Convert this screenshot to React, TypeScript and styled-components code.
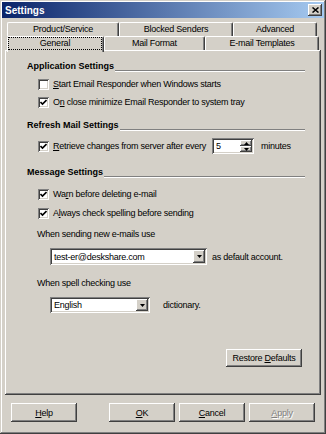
import React from "react";
import styled, { createGlobalStyle, css } from "styled-components";

const Global = createGlobalStyle`
  html, body { margin: 0; padding: 0; background: #d4d0c8; }
  body {
    font-family: "Liberation Sans", Arial, sans-serif;
    font-size: 9px;
    color: #000;
  }
  #root { width: 326px; height: 434px; }
  u { text-decoration-thickness: 1px; text-underline-offset: 1px; }
`;

const raised = css`
  box-shadow: inset -1px -1px #404040, inset 1px 1px #ffffff,
    inset -2px -2px #808080, inset 2px 2px #d4d0c8;
`;

const sunken = css`
  box-shadow: inset 1px 1px #808080, inset -1px -1px #ffffff,
    inset 2px 2px #404040, inset -2px -2px #d4d0c8;
`;

const Window = styled.div`
  width: 326px;
  height: 434px;
  box-sizing: border-box;
  padding: 2px;
  background: #d4d0c8;
  box-shadow: inset -1px -1px #404040, inset 1px 1px #d4d0c8,
    inset -2px -2px #808080, inset 2px 2px #ffffff;
  display: flex;
  flex-direction: column;
  letter-spacing: -0.25px;
`;

const TitleBar = styled.div`
  height: 16px;
  flex: none;
  display: flex;
  align-items: center;
  justify-content: space-between;
  padding: 0 2px 0 3px;
  background: linear-gradient(to right, #0a246a, #a6caf0);
`;

const Title = styled.span`
  color: #fff;
  font-weight: bold;
  font-size: 10px;
  letter-spacing: 0;
`;

const CloseButton = styled.div`
  width: 14px;
  height: 12px;
  box-sizing: border-box;
  background: #d4d0c8;
  ${raised};
  display: flex;
  align-items: center;
  justify-content: center;
`;

const Body = styled.div`
  flex: 1;
  display: flex;
  flex-direction: column;
  margin-top: 4px;
  padding: 0 3px;
  min-height: 0;
`;

const TabRow = styled.div`
  display: flex;
  height: 14px;
  padding-left: 2px;
  flex: none;
`;

const Tab = styled.div<{ $w: number; $selected?: boolean }>`
  width: ${(p) => p.$w}px;
  height: ${(p) => (p.$selected ? 16 : 14)}px;
  margin-bottom: ${(p) => (p.$selected ? -2 : 0)}px;
  position: relative;
  z-index: ${(p) => (p.$selected ? 2 : 0)};
  box-sizing: border-box;
  background: #d4d0c8;
  border-top: 1px solid #fff;
  border-left: 1px solid #fff;
  border-right: 1px solid #404040;
  border-radius: 2px 2px 0 0;
  box-shadow: inset -1px 0 #808080;
  display: flex;
  justify-content: center;
  padding-top: 1px;
  line-height: 11px;
`;

const FocusLabel = styled.span`
  display: block;
  position: absolute;
  left: 1px;
  right: 2px;
  top: 1px;
  height: 11px;
  outline: 1px dotted #000;
  text-align: center;
`;

const Panel = styled.div`
  flex: 1;
  position: relative;
  z-index: 1;
  box-sizing: border-box;
  background: #d4d0c8;
  box-shadow: inset -1px -1px #404040, inset 1px 1px #ffffff,
    inset -2px -2px #808080;
  padding: 7px 16px 0 22px;
  display: flex;
  flex-direction: column;
`;

const SectionHeader = styled.div<{ $mt?: number }>`
  height: 18px;
  margin-top: ${(p) => p.$mt ?? 0}px;
  display: flex;
  align-items: center;
`;

const SectionTitle = styled.span`
  font-weight: bold;
  letter-spacing: 0;
  font-size: 9px;
`;

const Rule = styled.div`
  flex: 1;
  height: 0;
  margin: 9px 0 0 1px;
  border-top: 1px solid #808080;
  border-bottom: 1px solid #fff;
`;

const CheckRow = styled.div<{ $mt?: number }>`
  height: 18px;
  margin-top: ${(p) => p.$mt ?? 0}px;
  margin-left: 11px;
  display: flex;
  align-items: center;
`;

const Box = styled.div`
  width: 11px;
  height: 11px;
  flex: none;
  box-sizing: border-box;
  background: #fff;
  ${sunken};
  display: flex;
  align-items: center;
  justify-content: center;
  margin-right: 4px;
`;

const Label = styled.div<{ $mt?: number }>`
  height: 18px;
  margin-top: ${(p) => p.$mt ?? 0}px;
  margin-left: 10px;
  display: flex;
  align-items: center;
`;

const FieldRow = styled.div<{ $mt?: number; $h: number; $gap: number }>`
  height: ${(p) => p.$h}px;
  margin-top: ${(p) => p.$mt ?? 0}px;
  margin-left: 23px;
  display: flex;
  align-items: center;
  gap: ${(p) => p.$gap}px;
`;

const Field = styled.div<{ $w: number; $h: number }>`
  width: ${(p) => p.$w}px;
  height: ${(p) => p.$h}px;
  box-sizing: border-box;
  background: #fff;
  ${sunken};
  display: flex;
  align-items: stretch;
  padding: 2px;
  flex: none;
`;

const FieldText = styled.span`
  flex: 1;
  padding-left: 2px;
  display: flex;
  align-items: center;
`;

const DropButton = styled.div`
  width: 12px;
  box-sizing: border-box;
  background: #d4d0c8;
  ${raised};
  display: flex;
  align-items: center;
  justify-content: center;
`;

const SpinButtons = styled.div`
  width: 12px;
  display: flex;
  flex-direction: column;
`;

const SpinButton = styled.div`
  flex: 1;
  background: #d4d0c8;
  ${raised};
  display: flex;
  align-items: center;
  justify-content: center;
`;

const Spin = styled(Field)`
  margin-left: 6px;
  margin-right: 7px;
`;

const Button = styled.div<{ $w: number; $disabled?: boolean }>`
  width: ${(p) => p.$w}px;
  height: 19px;
  box-sizing: border-box;
  background: #d4d0c8;
  ${raised};
  display: flex;
  align-items: center;
  justify-content: center;
  color: ${(p) => (p.$disabled ? "#808080" : "#000")};
  text-shadow: ${(p) => (p.$disabled ? "1px 1px 0 #fff" : "none")};
  flex: none;
`;

const RestoreRow = styled.div`
  margin-top: 36px;
  margin-right: 3px;
  display: flex;
  justify-content: flex-end;
`;

const RestoreButton = styled(Button)`
  height: 18px;
`;

const ButtonRow = styled.div`
  flex: none;
  display: flex;
  align-items: center;
  gap: 4px;
  margin: 8px 0 10px;
  padding: 0 9px;
`;

const Spacer = styled.div`
  flex: 1;
`;

const Check = () => (
  <svg width="7" height="7" viewBox="0 0 7 7">
    <path d="M0.5 3 L2.5 5 L6.5 1" fill="none" stroke="#000" strokeWidth="1.6" />
  </svg>
);

const DownArrow = () => (
  <svg width="5" height="3" viewBox="0 0 5 3">
    <path d="M0 0 H5 L2.5 3 Z" fill="#000" />
  </svg>
);

const UpSmall = () => (
  <svg width="5" height="3" viewBox="0 0 5 3">
    <path d="M0 3 H5 L2.5 0 Z" fill="#000" />
  </svg>
);

const DownSmall = () => (
  <svg width="5" height="3" viewBox="0 0 5 3">
    <path d="M0 0 H5 L2.5 3 Z" fill="#000" />
  </svg>
);

const CloseX = () => (
  <svg width="7" height="6" viewBox="0 0 7 6">
    <path d="M0.5 0.5 L6.5 5.5 M6.5 0.5 L0.5 5.5" stroke="#000" strokeWidth="1.5" />
  </svg>
);

const CheckItem: React.FC<{ checked?: boolean; mt?: number; children: React.ReactNode; extra?: React.ReactNode }> = ({
  checked,
  mt,
  children,
  extra,
}) => (
  <CheckRow $mt={mt}>
    <Box>{checked && <Check />}</Box>
    <span>{children}</span>
    {extra}
  </CheckRow>
);

const Section: React.FC<{ title: string; mt?: number }> = ({ title, mt }) => (
  <SectionHeader $mt={mt}>
    <SectionTitle>{title}</SectionTitle>
    <Rule />
  </SectionHeader>
);

export default function App() {
  return (
    <>
      <Global />
      <Window>
        <TitleBar>
          <Title>Settings</Title>
          <CloseButton>
            <CloseX />
          </CloseButton>
        </TitleBar>
        <Body>
          <TabRow>
            <Tab $w={112}>Product/Service</Tab>
            <Tab $w={114}>Blocked Senders</Tab>
            <Tab $w={84}>Advanced</Tab>
          </TabRow>
          <TabRow>
            <Tab $w={97} $selected>
              <FocusLabel>General</FocusLabel>
            </Tab>
            <Tab $w={101}>Mail Format</Tab>
            <Tab $w={114}>E-mail Templates</Tab>
          </TabRow>
          <Panel>
            <Section title="Application Settings" />
            <CheckItem>
              <u>S</u>tart Email Responder when Windows starts
            </CheckItem>
            <CheckItem checked>
              O<u>n</u> close minimize Email Responder to system tray
            </CheckItem>

            <Section title="Refresh Mail Settings" mt={5} />
            <CheckItem
              checked
              mt={3}
              extra={
                <>
                  <Spin $w={42} $h={16}>
                    <FieldText>5</FieldText>
                    <SpinButtons>
                      <SpinButton>
                        <UpSmall />
                      </SpinButton>
                      <SpinButton>
                        <DownSmall />
                      </SpinButton>
                    </SpinButtons>
                  </Spin>
                  <span>minutes</span>
                </>
              }
            >
              <u>R</u>etrieve changes from server after every
            </CheckItem>

            <Section title="Message Settings" mt={8} />
            <CheckItem checked mt={4}>
              Wa<u>r</u>n before deleting e-mail
            </CheckItem>
            <CheckItem checked mt={1}>
              A<u>l</u>ways check spelling before sending
            </CheckItem>

            <Label $mt={3}>When sending new e-mails use</Label>
            <FieldRow $mt={5} $h={17} $gap={5}>
              <Field $w={157} $h={17}>
                <FieldText>test-er@deskshare.com</FieldText>
                <DropButton>
                  <DownArrow />
                </DropButton>
              </Field>
              <span>as default account.</span>
            </FieldRow>

            <Label $mt={9}>When spell checking use</Label>
            <FieldRow $mt={5} $h={16} $gap={13}>
              <Field $w={100} $h={16}>
                <FieldText>English</FieldText>
                <DropButton>
                  <DownArrow />
                </DropButton>
              </Field>
              <span>dictionary.</span>
            </FieldRow>

            <RestoreRow>
              <RestoreButton $w={76}>
                Restore&nbsp;<u>D</u>efaults
              </RestoreButton>
            </RestoreRow>
          </Panel>
        </Body>
        <ButtonRow>
          <Button $w={66}>
            <u>H</u>elp
          </Button>
          <Spacer />
          <Button $w={66}>
            <u>O</u>K
          </Button>
          <Button $w={66}>
            <u>C</u>ancel
          </Button>
          <Button $w={66} $disabled>
            <u>A</u>pply
          </Button>
        </ButtonRow>
      </Window>
    </>
  );
}
